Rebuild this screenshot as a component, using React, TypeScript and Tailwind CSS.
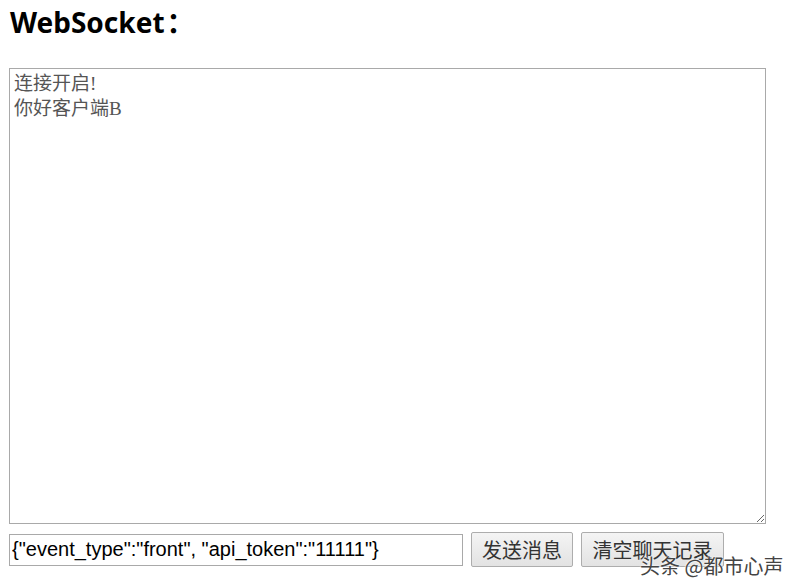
const App = () => {
  return (
    <div className="relative w-[801px] h-[586px] bg-white overflow-hidden">
      <div className="pl-[9px] pt-[6px]">
        <h2 className="pl-[1px] text-[28px] leading-[32px] font-bold text-black font-['Noto_Sans','Noto_Sans_CJK_SC',sans-serif]">
          WebSocket<span className="ml-[2px]">：</span>
        </h2>
        <textarea
          readOnly
          defaultValue={'连接开启!\n你好客户端B'}
          className="mt-[30px] block w-[757px] h-[456px] border border-[#a9a9a9] px-[4px] py-[2px] text-[19px] leading-[25px] text-[#555] font-['Liberation_Serif','Noto_Sans_CJK_SC',serif] outline-none resize"
        />
        <div className="mt-[8px] flex items-center gap-[8px]">
          <input
            readOnly
            defaultValue={'{"event_type":"front", "api_token":"11111"}'}
            className="w-[454px] h-[32px] border border-[#a9a9a9] px-[2px] text-[20px] text-black font-['Liberation_Sans','Noto_Sans_CJK_SC',sans-serif] outline-none"
          />
          <button className="w-[102px] h-[35px] border border-[#adadad] rounded-[2px] bg-gradient-to-b from-[#f4f4f4] to-[#e3e3e3] text-[20px] leading-none text-[#333] font-['Noto_Sans_CJK_SC',sans-serif]">
            发送消息
          </button>
          <button className="w-[143px] h-[35px] border border-[#adadad] rounded-[2px] bg-gradient-to-b from-[#f4f4f4] to-[#e3e3e3] text-[20px] leading-none text-[#333] font-['Noto_Sans_CJK_SC',sans-serif]">
            清空聊天记录
          </button>
        </div>
      </div>
      <div className="absolute left-[640px] top-[552px] text-[20px] leading-[28px] text-[#444] font-['Noto_Sans_CJK_SC',sans-serif] [text-shadow:0_0_2px_#fff,0_0_2px_#fff]">
        头条 @都市心声
      </div>
    </div>
  )
}

export default App
